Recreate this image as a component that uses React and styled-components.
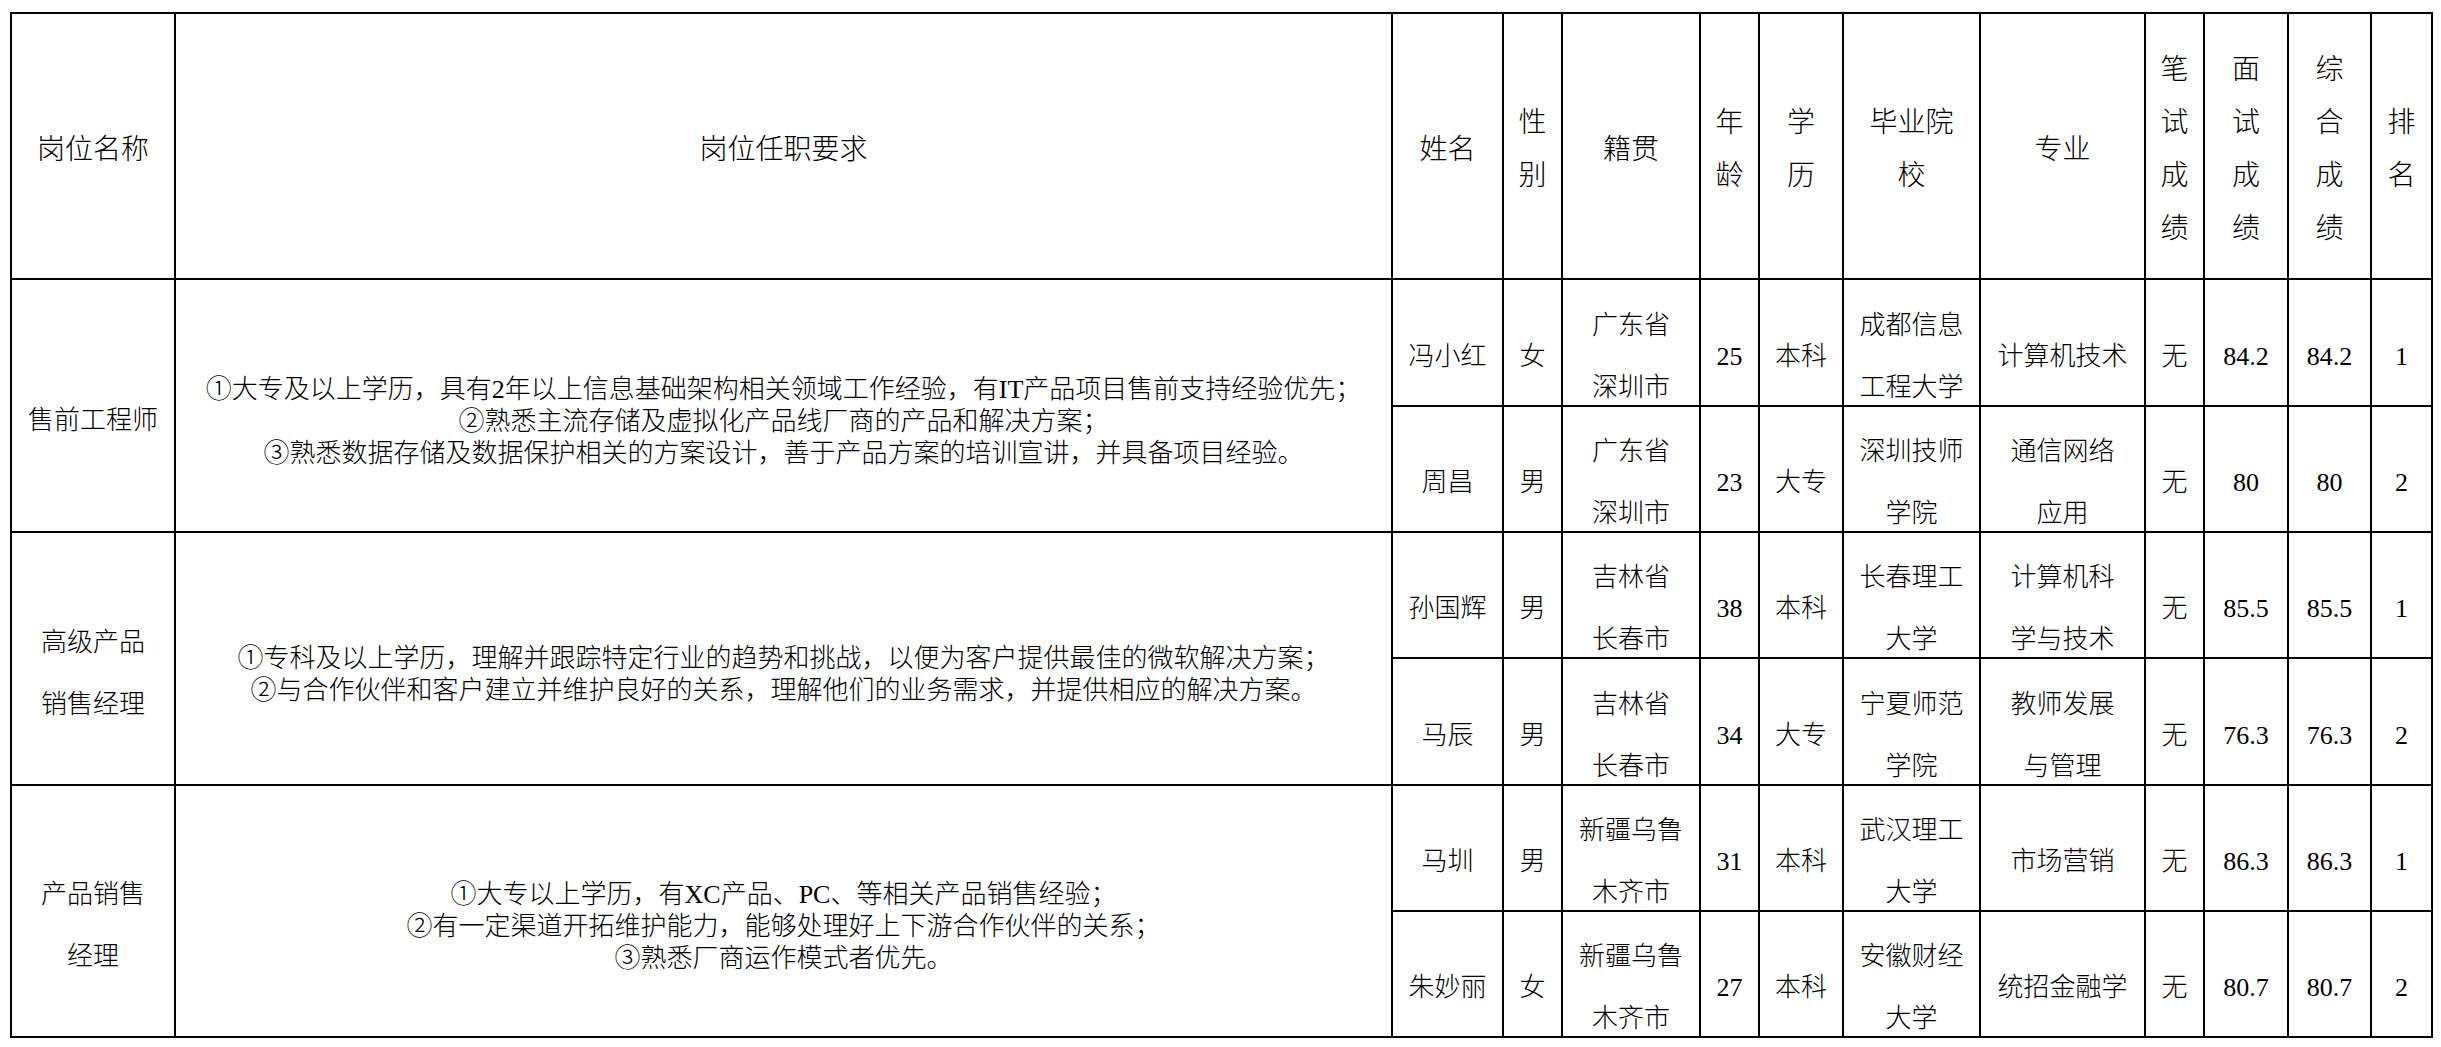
import React from 'react';
import styled, { createGlobalStyle } from 'styled-components';

const GlobalStyle = createGlobalStyle`
    html, body {
        margin: 0;
        padding: 0;
        background: #fff;
    }

    body {
        font-family: "Liberation Serif", "Noto Sans CJK SC", serif;
        color: #000;
    }
`;

const Page = styled.div`
    padding: 12px 0 0 10px;
`;

const Table = styled.table`
    border-collapse: collapse;
    table-layout: fixed;
    width: 2421px;
    border: 2px solid #000;
`;

const HeadRow = styled.tr`
    height: 266px;
`;

const BodyRow = styled.tr`
    height: ${p => p.$h}px;
`;

const HeadCell = styled.th`
    border: 2px solid #000;
    padding: 6px 0 0;
    font-size: 28px;
    font-weight: 300;
    text-align: center;
    vertical-align: middle;
    white-space: nowrap;
`;

const Cell = styled.td`
    border: 2px solid #000;
    padding: ${p => p.$top}px 0 0;
    font-size: 26px;
    font-weight: 300;
    text-align: center;
    vertical-align: middle;
    white-space: nowrap;
`;

const Stack = styled.div`
    display: flex;
    flex-direction: column;
    align-items: center;
    gap: ${p => p.$gap}px;
    line-height: ${p => p.$lh}px;
`;

const Lines = ({ lines, gap = 30, lh = 32 }) => (
    <Stack $gap={gap} $lh={lh}>
        {lines.map((t, i) => <span key={i}>{t}</span>)}
    </Stack>
);

const cols = [164, 1217, 111, 59, 138, 59, 84, 137, 165, 59, 84, 83, 61];

const heads = [
    ['岗位名称'], ['岗位任职要求'], ['姓名'], ['性', '别'], ['籍贯'], ['年', '龄'], ['学', '历'],
    ['毕业院', '校'], ['专业'], ['笔', '试', '成', '绩'], ['面', '试', '成', '绩'], ['综', '合', '成', '绩'], ['排', '名'],
];

const groups = [
    {
        title: '售前工程师',
        reqs: [
            '①大专及以上学历，具有2年以上信息基础架构相关领域工作经验，有IT产品项目售前支持经验优先；',
            '②熟悉主流存储及虚拟化产品线厂商的产品和解决方案；',
            '③熟悉数据存储及数据保护相关的方案设计，善于产品方案的培训宣讲，并具备项目经验。',
        ],
        rows: [
            ['冯小红', '女', '广东省/深圳市', '25', '本科', '成都信息/工程大学', '计算机技术', '无', '84.2', '84.2', '1'],
            ['周昌', '男', '广东省/深圳市', '23', '大专', '深圳技师/学院', '通信网络/应用', '无', '80', '80', '2'],
        ],
        heights: [127, 126],
    },
    {
        title: '高级产品/销售经理',
        reqs: [
            '①专科及以上学历，理解并跟踪特定行业的趋势和挑战，以便为客户提供最佳的微软解决方案；',
            '②与合作伙伴和客户建立并维护良好的关系，理解他们的业务需求，并提供相应的解决方案。',
        ],
        rows: [
            ['孙国辉', '男', '吉林省/长春市', '38', '本科', '长春理工/大学', '计算机科/学与技术', '无', '85.5', '85.5', '1'],
            ['马辰', '男', '吉林省/长春市', '34', '大专', '宁夏师范/学院', '教师发展/与管理', '无', '76.3', '76.3', '2'],
        ],
        heights: [126, 127],
    },
    {
        title: '产品销售/经理',
        reqs: [
            '①大专以上学历，有XC产品、PC、等相关产品销售经验；',
            '②有一定渠道开拓维护能力，能够处理好上下游合作伙伴的关系；',
            '③熟悉厂商运作模式者优先。',
        ],
        rows: [
            ['马圳', '男', '新疆乌鲁/木齐市', '31', '本科', '武汉理工/大学', '市场营销', '无', '86.3', '86.3', '1'],
            ['朱妙丽', '女', '新疆乌鲁/木齐市', '27', '本科', '安徽财经/大学', '统招金融学', '无', '80.7', '80.7', '2'],
        ],
        heights: [126, 126],
    },
];

export default function App() {
    return (
        <Page>
            <GlobalStyle />
            <Table>
                <colgroup>
                    {cols.map((w, i) => <col key={i} style={{ width: w }} />)}
                </colgroup>
                <thead>
                    <HeadRow>
                        {heads.map(lines => (
                            <HeadCell key={lines.join('')}>
                                <Lines lines={lines} gap={0} lh={53} />
                            </HeadCell>
                        ))}
                    </HeadRow>
                </thead>
                <tbody>
                    {groups.map(g => g.rows.map((r, ri) => (
                        <BodyRow key={r[0]} $h={g.heights[ri]}>
                            {ri === 0 && (
                                <>
                                    <Cell rowSpan={2} $top={30}><Lines lines={g.title.split('/')} /></Cell>
                                    <Cell rowSpan={2} $top={32}><Lines lines={g.reqs} gap={0} /></Cell>
                                </>
                            )}
                            {r.map((v, ci) => (
                                <Cell key={ci} $top={28}><Lines lines={v.split('/')} /></Cell>
                            ))}
                        </BodyRow>
                    )))}
                </tbody>
            </Table>
        </Page>
    );
}
